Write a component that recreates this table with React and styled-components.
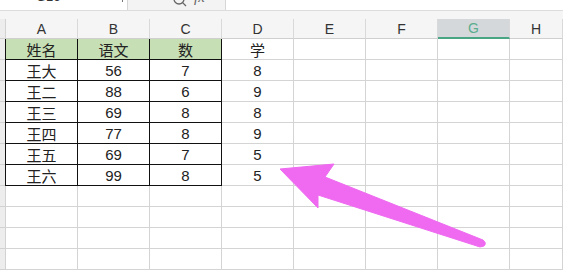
import React from "react";
import styled, { createGlobalStyle } from "styled-components";

const GlobalStyle = createGlobalStyle`
  html, body { margin: 0; padding: 0; background: #ffffff; }
  body { font-family: "Noto Sans CJK SC", "Noto Sans", sans-serif; overflow: hidden; }
`;

const Sheet = styled.div`
  position: relative;
  width: 563px;
  height: 276px;
  overflow: hidden;
  background: #ffffff;
`;

const FormulaBar = styled.div`
  display: flex;
  height: 10px;
  background: #f3f3f3;
  border-bottom: 1px solid #dcdcdc;
  overflow: hidden;
`;

const NameBox = styled.div`
  width: 127px;
  height: 10px;
  background: #ffffff;
  border-right: 1px solid #d6d6d6;
  position: relative;
  overflow: hidden;
  font-family: "Liberation Sans", sans-serif;
  font-size: 13px;
  color: #333;
  span { position: absolute; left: 36px; top: -11px; }
  i { position: absolute; right: 4px; top: -3px; width: 1px; height: 5px; background: #777; }
`;

const Tools = styled.div`
  width: 97px;
  position: relative;
  overflow: hidden;
  color: #666;
  font-family: "Liberation Serif", serif;
  font-style: italic;
  font-size: 15px;
  svg { position: absolute; left: 44px; top: -8px; }
  span { position: absolute; left: 66px; top: -11px; }
`;

const FormulaInput = styled.div`
  flex: 1;
  height: 10px;
  background: #ffffff;
  border-left: 1px solid #d6d6d6;
`;

const Gap = styled.div`
  height: 8px;
  background: #f5f5f5;
`;

const Grid = styled.div`
  display: grid;
  grid-template-columns: 6px repeat(7, 72px) 1fr;
  grid-auto-rows: 21px;
  grid-template-rows: 20px;
`;

const ColHead = styled.div`
  display: flex;
  align-items: center;
  justify-content: center;
  font-family: "Liberation Sans", sans-serif;
  font-size: 14px;
  color: ${(p) => (p.$active ? "#5aae8e" : "#333")};
  background: ${(p) => (p.$active ? "#d5d8db" : "#f5f5f5")};
  border-right: 1px solid #d9d9d9;
  border-bottom: ${(p) => (p.$active ? "2px solid #4aa585" : "1px solid #cfcfcf")};
  box-sizing: border-box;
`;

const RowHead = styled.div`
  background: #ededed;
  border-right: 1px solid #d2d2d2;
  border-bottom: 1px solid #d2d2d2;
  box-sizing: border-box;
`;

const Cell = styled.div`
  display: flex;
  align-items: center;
  justify-content: center;
  box-sizing: border-box;
  font-family: "Liberation Sans", "Noto Sans CJK SC", sans-serif;
  font-size: 15px;
  color: #222;
  padding-top: 1px;
  background: ${(p) => (p.$head ? "#c6dfb4" : "#ffffff")};
  border-right: 1px solid ${(p) => (p.$boxed ? "#111" : "#d4d4d4")};
  border-bottom: 1px solid ${(p) => (p.$boxed ? "#111" : "#d4d4d4")};
  margin-left: ${(p) => (p.$first ? "-1px" : "0")};
  border-left: ${(p) => (p.$first ? "1px solid #111" : "none")};
`;

const Arrow = styled.svg`
  position: absolute;
  left: 0;
  top: 0;
  pointer-events: none;
`;

const cols = ["A", "B", "C", "D", "E", "F", "G", "H"];

const rows = [
  ["姓名", "语文", "数", "学"],
  ["王大", "56", "7", "8"],
  ["王二", "88", "6", "9"],
  ["王三", "69", "8", "8"],
  ["王四", "77", "8", "9"],
  ["王五", "69", "7", "5"],
  ["王六", "99", "8", "5"],
  ["", "", "", ""],
  ["", "", "", ""],
  ["", "", "", ""],
  ["", "", "", ""],
];

export default function App() {
  return (
    <Sheet>
      <GlobalStyle />
      <FormulaBar>
        <NameBox>
          <span>G16</span>
          <i />
        </NameBox>
        <Tools>
          <svg width="16" height="16" viewBox="0 0 16 16" fill="none" stroke="#666" strokeWidth="1.3">
            <circle cx="7" cy="7" r="5" />
            <line x1="10.6" y1="10.6" x2="14" y2="14" />
          </svg>
          <span>fx</span>
        </Tools>
        <FormulaInput />
      </FormulaBar>
      <Gap />
      <Grid>
        <RowHead />
        {cols.map((c) => (
          <ColHead key={c} $active={c === "G"}>
            {c}
          </ColHead>
        ))}
        {rows.map((r, i) => (
          <React.Fragment key={i}>
            <RowHead />
            {cols.map((c, j) => {
              const boxed = i < 7 && j < 3;
              return (
                <Cell
                  key={c}
                  $boxed={boxed}
                  $first={boxed && j === 0}
                  $head={i === 0 && j < 3}
                >
                  {r[j] || ""}
                </Cell>
              );
            })}
          </React.Fragment>
        ))}
      </Grid>
      <Arrow width="563" height="276" viewBox="0 0 563 276">
        <path
          d="M280 169 L334 164 L325 177 L483 240 Q487 243 484 246 L480 247 L318 195 L318 208 Z"
          fill="#ef6af0"
          stroke="#ef6af0"
          strokeWidth="1"
          strokeLinejoin="round"
        />
      </Arrow>
    </Sheet>
  );
}
